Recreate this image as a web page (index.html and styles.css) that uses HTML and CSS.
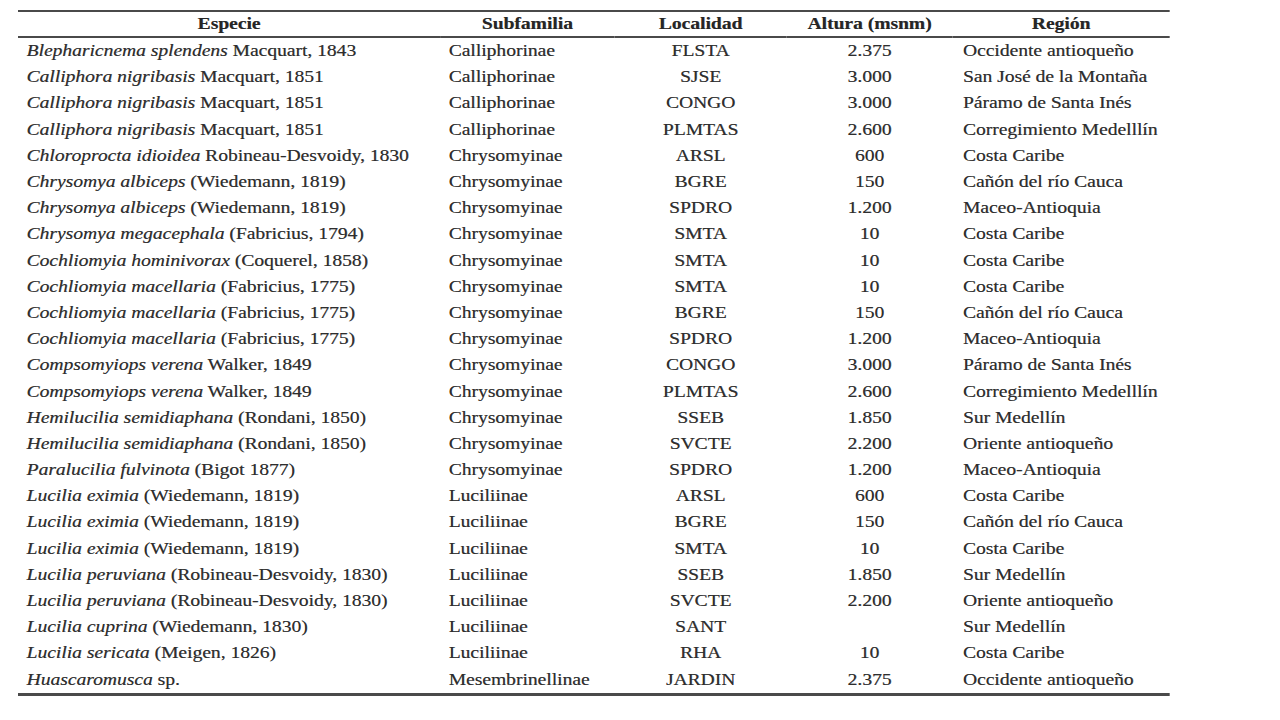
FILE: index.html
```html
<!DOCTYPE html>
<html lang="es">
<head>
<meta charset="utf-8">
<title>Especies</title>
<link rel="stylesheet" href="styles.css">
</head>
<body>
<table class="species">
  <thead>
    <tr>
      <th class="c-sp">Especie</th>
      <th class="c-sf">Subfamilia</th>
      <th class="c-lo">Localidad</th>
      <th class="c-al">Altura (msnm)</th>
      <th class="c-re">Región</th>
    </tr>
  </thead>
  <tbody>
    <tr><td class="c-sp"><i>Blepharicnema splendens</i> Macquart, 1843</td><td class="c-sf">Calliphorinae</td><td class="c-lo">FLSTA</td><td class="c-al">2.375</td><td class="c-re">Occidente antioqueño</td></tr>
    <tr><td class="c-sp"><i>Calliphora nigribasis</i> Macquart, 1851</td><td class="c-sf">Calliphorinae</td><td class="c-lo">SJSE</td><td class="c-al">3.000</td><td class="c-re">San José de la Montaña</td></tr>
    <tr><td class="c-sp"><i>Calliphora nigribasis</i> Macquart, 1851</td><td class="c-sf">Calliphorinae</td><td class="c-lo">CONGO</td><td class="c-al">3.000</td><td class="c-re">Páramo de Santa Inés</td></tr>
    <tr><td class="c-sp"><i>Calliphora nigribasis</i> Macquart, 1851</td><td class="c-sf">Calliphorinae</td><td class="c-lo">PLMTAS</td><td class="c-al">2.600</td><td class="c-re">Corregimiento Medelllín</td></tr>
    <tr><td class="c-sp"><i>Chloroprocta idioidea</i> Robineau-Desvoidy, 1830</td><td class="c-sf">Chrysomyinae</td><td class="c-lo">ARSL</td><td class="c-al">600</td><td class="c-re">Costa Caribe</td></tr>
    <tr><td class="c-sp"><i>Chrysomya albiceps</i> (Wiedemann, 1819)</td><td class="c-sf">Chrysomyinae</td><td class="c-lo">BGRE</td><td class="c-al">150</td><td class="c-re">Cañón del río Cauca</td></tr>
    <tr><td class="c-sp"><i>Chrysomya albiceps</i> (Wiedemann, 1819)</td><td class="c-sf">Chrysomyinae</td><td class="c-lo">SPDRO</td><td class="c-al">1.200</td><td class="c-re">Maceo-Antioquia</td></tr>
    <tr><td class="c-sp"><i>Chrysomya megacephala</i> (Fabricius, 1794)</td><td class="c-sf">Chrysomyinae</td><td class="c-lo">SMTA</td><td class="c-al">10</td><td class="c-re">Costa Caribe</td></tr>
    <tr><td class="c-sp"><i>Cochliomyia hominivorax</i> (Coquerel, 1858)</td><td class="c-sf">Chrysomyinae</td><td class="c-lo">SMTA</td><td class="c-al">10</td><td class="c-re">Costa Caribe</td></tr>
    <tr><td class="c-sp"><i>Cochliomyia macellaria</i> (Fabricius, 1775)</td><td class="c-sf">Chrysomyinae</td><td class="c-lo">SMTA</td><td class="c-al">10</td><td class="c-re">Costa Caribe</td></tr>
    <tr><td class="c-sp"><i>Cochliomyia macellaria</i> (Fabricius, 1775)</td><td class="c-sf">Chrysomyinae</td><td class="c-lo">BGRE</td><td class="c-al">150</td><td class="c-re">Cañón del río Cauca</td></tr>
    <tr><td class="c-sp"><i>Cochliomyia macellaria</i> (Fabricius, 1775)</td><td class="c-sf">Chrysomyinae</td><td class="c-lo">SPDRO</td><td class="c-al">1.200</td><td class="c-re">Maceo-Antioquia</td></tr>
    <tr><td class="c-sp"><i>Compsomyiops verena</i> Walker, 1849</td><td class="c-sf">Chrysomyinae</td><td class="c-lo">CONGO</td><td class="c-al">3.000</td><td class="c-re">Páramo de Santa Inés</td></tr>
    <tr><td class="c-sp"><i>Compsomyiops verena</i> Walker, 1849</td><td class="c-sf">Chrysomyinae</td><td class="c-lo">PLMTAS</td><td class="c-al">2.600</td><td class="c-re">Corregimiento Medelllín</td></tr>
    <tr><td class="c-sp"><i>Hemilucilia semidiaphana</i> (Rondani, 1850)</td><td class="c-sf">Chrysomyinae</td><td class="c-lo">SSEB</td><td class="c-al">1.850</td><td class="c-re">Sur Medellín</td></tr>
    <tr><td class="c-sp"><i>Hemilucilia semidiaphana</i> (Rondani, 1850)</td><td class="c-sf">Chrysomyinae</td><td class="c-lo">SVCTE</td><td class="c-al">2.200</td><td class="c-re">Oriente antioqueño</td></tr>
    <tr><td class="c-sp"><i>Paralucilia fulvinota</i> (Bigot 1877)</td><td class="c-sf">Chrysomyinae</td><td class="c-lo">SPDRO</td><td class="c-al">1.200</td><td class="c-re">Maceo-Antioquia</td></tr>
    <tr><td class="c-sp"><i>Lucilia eximia</i> (Wiedemann, 1819)</td><td class="c-sf">Luciliinae</td><td class="c-lo">ARSL</td><td class="c-al">600</td><td class="c-re">Costa Caribe</td></tr>
    <tr><td class="c-sp"><i>Lucilia eximia</i> (Wiedemann, 1819)</td><td class="c-sf">Luciliinae</td><td class="c-lo">BGRE</td><td class="c-al">150</td><td class="c-re">Cañón del río Cauca</td></tr>
    <tr><td class="c-sp"><i>Lucilia eximia</i> (Wiedemann, 1819)</td><td class="c-sf">Luciliinae</td><td class="c-lo">SMTA</td><td class="c-al">10</td><td class="c-re">Costa Caribe</td></tr>
    <tr><td class="c-sp"><i>Lucilia peruviana</i> (Robineau-Desvoidy, 1830)</td><td class="c-sf">Luciliinae</td><td class="c-lo">SSEB</td><td class="c-al">1.850</td><td class="c-re">Sur Medellín</td></tr>
    <tr><td class="c-sp"><i>Lucilia peruviana</i> (Robineau-Desvoidy, 1830)</td><td class="c-sf">Luciliinae</td><td class="c-lo">SVCTE</td><td class="c-al">2.200</td><td class="c-re">Oriente antioqueño</td></tr>
    <tr><td class="c-sp"><i>Lucilia cuprina</i> (Wiedemann, 1830)</td><td class="c-sf">Luciliinae</td><td class="c-lo">SANT</td><td class="c-al"></td><td class="c-re">Sur Medellín</td></tr>
    <tr><td class="c-sp"><i>Lucilia sericata</i> (Meigen, 1826)</td><td class="c-sf">Luciliinae</td><td class="c-lo">RHA</td><td class="c-al">10</td><td class="c-re">Costa Caribe</td></tr>
    <tr><td class="c-sp"><i>Huascaromusca</i> sp.</td><td class="c-sf">Mesembrinellinae</td><td class="c-lo">JARDIN</td><td class="c-al">2.375</td><td class="c-re">Occidente antioqueño</td></tr>
  </tbody>
</table>
</body>
</html>
```

FILE: styles.css
```css
html, body {
  margin: 0;
  padding: 0;
  background: #ffffff;
}

body {
  font-family: "Liberation Serif", "Times New Roman", serif;
  color: #2e2e2e;
  font-size: 16px;
}

/* The source table is a horizontally stretched scan: 1.22x wide */
.species {
  margin: 10px 0 0 18px;
  width: 944px;
  border-collapse: separate;
  border-spacing: 0;
  table-layout: fixed;
  border-top: 2px solid #4a4a4a;
  border-bottom: 3px solid #4a4a4a;
  transform: scaleX(1.22);
  transform-origin: 0 0;
  text-shadow: 0.35px 0 0 rgba(46, 46, 46, 0.55);
}

.species th {
  font-weight: bold;
  text-align: center;
  height: 24px;
  padding: 0;
  line-height: 24px;
  color: #262626;
  border-bottom: 2px solid #4a4a4a;
}

.species td {
  height: 26.2px;
  padding: 0;
  line-height: 26px;
  white-space: nowrap;
}

.species i {
  font-style: italic;
}

.c-sp { width: 346px; }
.c-sf { width: 143px; }
.c-lo { width: 141px; }
.c-al { width: 136px; }
.c-re { width: 178px; }

.species td.c-sp,
.species td.c-sf,
.species td.c-re {
  text-align: left;
  padding-left: 7px;
}

.species td.c-re {
  padding-left: 8.5px;
}

.species td.c-lo,
.species td.c-al {
  text-align: center;
}
```
